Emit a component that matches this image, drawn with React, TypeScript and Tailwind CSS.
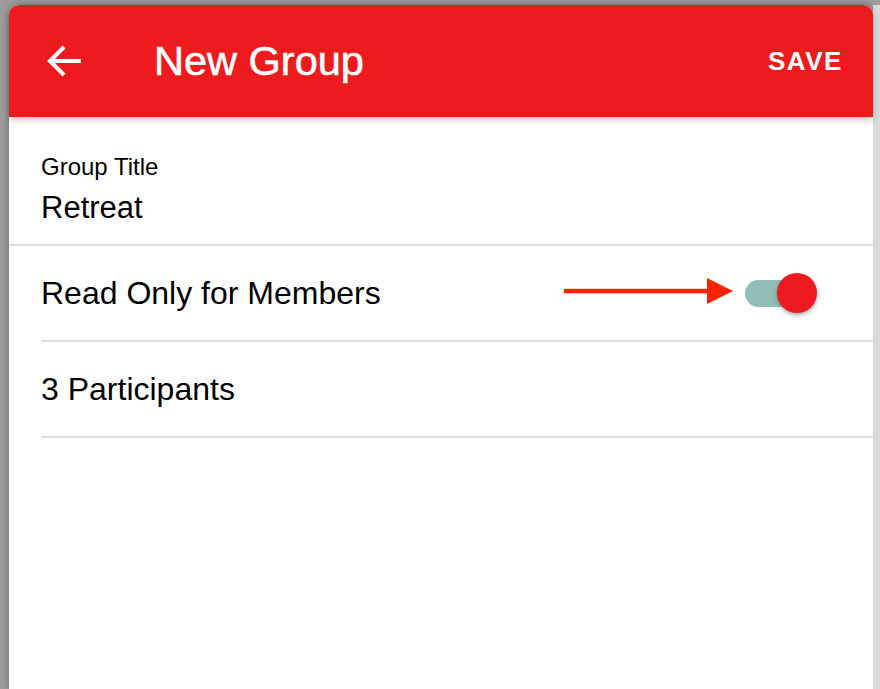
import { useState } from 'react'

function BackArrow() {
  return (
    <svg width="36" height="32" viewBox="0 0 36 32" fill="none">
      <path d="M34 16H3" stroke="white" strokeWidth="4" />
      <path d="M17 2L3 16L17 30" stroke="white" strokeWidth="4" />
    </svg>
  )
}

function Pointer() {
  return (
    <svg width="169" height="26" viewBox="0 0 169 26" className="-mt-[4px]">
      <rect x="0" y="10.8" width="146" height="4.5" fill="#ff2200" />
      <polygon points="143,0 169,13 143,26" fill="#ff2200" />
    </svg>
  )
}

function Toggle({ on, onChange }: { on: boolean; onChange: () => void }) {
  return (
    <button onClick={onChange} className="relative w-[72px] h-[40px] shrink-0">
      <span className={`absolute left-0 top-[7px] w-[62px] h-[27px] rounded-full ${on ? 'bg-[#93bdb7]' : 'bg-[#c7c7c7]'}`} />
      <span
        className={`absolute top-0 w-[40px] h-[40px] rounded-full shadow-[0_2px_4px_rgba(0,0,0,0.35)] ${on ? 'right-0 bg-[#ed1b1f]' : 'left-0 bg-[#f4f4f4]'}`}
      />
    </button>
  )
}

export default function App() {
  const [readOnly, setReadOnly] = useState(true)

  return (
    <div className="w-[880px] h-[689px] overflow-hidden bg-[#9c9c9c] flex pt-[5px] text-black font-['Liberation_Sans',Arial,sans-serif]">
      <div className="w-[9px] shrink-0" />

      <div className="w-[864px] shrink-0 flex flex-col bg-white rounded-t-[10px] shadow-[0_0_8px_rgba(0,0,0,0.3)]">
        {/* Header */}
        <div className="relative z-10 h-[112px] shrink-0 flex items-center pl-[38px] pr-[30px] bg-[#ed1b1e] rounded-t-[10px] shadow-[0_3px_6px_rgba(0,0,0,0.22)] text-white">
          <BackArrow />
          <h1 className="ml-[71px] text-[41.5px] leading-none font-medium [-webkit-text-stroke:0.6px_white]">New Group</h1>
          <button className="ml-auto text-[26px] leading-none font-bold tracking-[0.06em]">SAVE</button>
        </div>

        {/* Title */}
        <div className="h-[129px] shrink-0 border-b-2 border-[#dddddd] pl-[32px] pt-[38px]">
          <p className="text-[24px] leading-none">Group Title</p>
          <p className="mt-[13px] text-[31px] leading-none">Retreat</p>
        </div>

        <div className="h-[96px] shrink-0 ml-[32px] pr-[56px] border-b-2 border-[#dddddd] flex items-center">
          <span className="text-[32px] leading-none">Read Only for Members</span>
          <div className="ml-auto flex items-center gap-[12px]">
            <Pointer />
            <Toggle on={readOnly} onChange={() => setReadOnly(v => !v)} />
          </div>
        </div>

        <div className="h-[96px] shrink-0 ml-[32px] border-b-2 border-[#dddddd] flex items-center">
          <span className="text-[32px] leading-none">3 Participants</span>
        </div>

        <div className="flex-1" />
      </div>

      <div className="w-[7px] shrink-0 bg-[#d9d9d9]" />
    </div>
  )
}
